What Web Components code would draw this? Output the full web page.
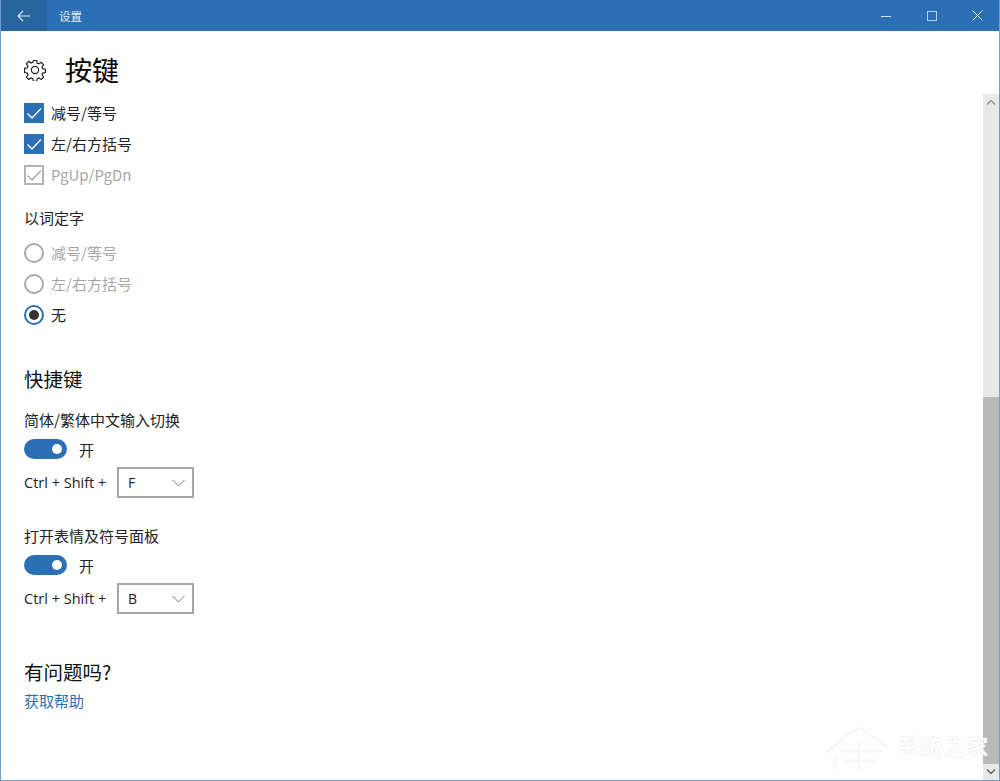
<!DOCTYPE html>
<html lang="zh">
<head>
<meta charset="utf-8">
<title>设置</title>
<style>
  html, body { margin: 0; height: 100%; background: #fff; }
  body { font-family: "Noto Sans CJK SC", "Liberation Sans", sans-serif; overflow: hidden; }
</style>
</head>
<body>
<settings-window>
  <page-heading>按键</page-heading>
  <win-check checked>减号/等号</win-check>
  <win-check checked>左/右方括号</win-check>
  <win-check checked disabled>PgUp/PgDn</win-check>
  <field-label style="margin-top:17px">以词定字</field-label>
  <win-radio disabled style="margin-top:8px">减号/等号</win-radio>
  <win-radio disabled>左/右方括号</win-radio>
  <win-radio checked>无</win-radio>
  <section-title style="margin-top:35px">快捷键</section-title>
  <shortcut-field label="简体/繁体中文输入切换" key-name="F" style="margin-top:16px"></shortcut-field>
  <shortcut-field label="打开表情及符号面板" key-name="B" style="margin-top:27px"></shortcut-field>
  <section-title style="margin-top:44px">有问题吗?</section-title>
  <help-link style="margin-top:4px">获取帮助</help-link>
</settings-window>

<script>
const FONT = `"Noto Sans CJK SC", "Liberation Sans", sans-serif`;
const check = '<svg width="20" height="20" viewBox="0 0 20 20" fill="none"><path d="M3.5 10.5 8 15 17 5.5" stroke="currentColor" stroke-width="1.4"/></svg>';

class SettingsWindow extends HTMLElement {
  constructor() {
    super();
    this.attachShadow({ mode: 'open' }).innerHTML = `
      <style>
        :host { display: flex; flex-direction: column; height: 781px; box-sizing: border-box;
          border: solid #6f9fd0; border-width: 0 1px 1px; position: relative; overflow: hidden; color: #1a1a1a; }
        .body { flex: 1; display: flex; min-height: 0; }
        .content { flex: 1; display: flex; flex-direction: column; padding: 23px 0 0 23px; }
        .wm { position: absolute; right: 9px; bottom: 20px; font: 700 21px ${FONT}; letter-spacing: 2px;
          color: #fff; text-shadow: 0 0 2px #dcdcdc; }
        .wm-logo { position: absolute; right: 110px; bottom: 5px; }
      </style>
      <title-bar></title-bar>
      <div class="body">
        <div class="content"><slot></slot></div>
        <win-scrollbar></win-scrollbar>
      </div>
      <svg class="wm-logo" width="66" height="52" viewBox="0 0 66 52" fill="none" stroke="#f7f7f7" stroke-width="3">
        <path d="M2 30 36 4 64 24M18 28h40M20 38h34M36 18v30M12 32v14"/>
      </svg>
      <div class="wm">系统之家</div>`;
  }
}

class TitleBar extends HTMLElement {
  constructor() {
    super();
    this.attachShadow({ mode: 'open' }).innerHTML = `
      <style>
        :host { display: flex; align-items: center; height: 31px; flex: none; margin: 0 -1px;
          background: #2b70b7; color: #e4eef8; font: 11.5px ${FONT}; }
        .back { width: 47px; height: 100%; background: #28649f; display: flex; align-items: center; justify-content: center; }
        .name { margin-left: 12px; flex: 1; }
        .ctl { width: 46px; height: 100%; display: flex; align-items: center; justify-content: center; }
        .ctl:last-child { width: 44px; margin-right: 1px; }
      </style>
      <div class="back"><svg width="14" height="12" viewBox="0 0 14 12" fill="none" stroke="#e4eef8" stroke-width="1.1"><path d="M13 6H1M6 1 1 6l5 5"/></svg></div>
      <div class="name">设置</div>
      <div class="ctl"><svg width="10" height="10" fill="none" stroke="#d7e5f4"><path d="M0 5.5h10"/></svg></div>
      <div class="ctl"><svg width="10" height="10" fill="none" stroke="#b9d4f0"><rect x=".5" y=".5" width="9" height="9"/></svg></div>
      <div class="ctl"><svg width="11" height="11" fill="none" stroke="#e4eef8"><path d="M.5.5l10 10M10.5.5l-10 10"/></svg></div>`;
  }
}

class WinScrollbar extends HTMLElement {
  constructor() {
    super();
    this.attachShadow({ mode: 'open' }).innerHTML = `
      <style>
        :host { display: flex; flex-direction: column; width: 16px; margin-top: 63px; flex: none; background: #e9e9e9; }
        .arrow { height: 16px; flex: none; display: flex; align-items: center; justify-content: center; }
        .track { flex: none; height: 287px; }
        .thumb { flex: 1; background: #b9b9b9; }
      </style>
      <div class="arrow"><svg width="10" height="6" fill="none" stroke="#8a8a8a" stroke-width="1.2"><path d="M1 5.5 5 1.5 9 5.5"/></svg></div>
      <div class="track"></div>
      <div class="thumb"></div>
      <div class="arrow"><svg width="10" height="6" fill="none" stroke="#555" stroke-width="1.2"><path d="M1 .5 5 4.5 9 .5"/></svg></div>`;
  }
}

class PageHeading extends HTMLElement {
  constructor() {
    super();
    this.attachShadow({ mode: 'open' }).innerHTML = `
      <style>
        :host { display: flex; align-items: center; height: 32px; margin-bottom: 11px; font: 27px/32px ${FONT}; color: #000; }
        svg { margin-right: 19px; flex: none; }
      </style>
      <svg width="22" height="22" viewBox="0 0 22 22" fill="none" stroke="#222" stroke-width="1.2">
        <path d="M9.3 1.5h3.4l.5 2.7 1.7.7 2.3-1.6 2.4 2.4-1.6 2.3.7 1.7 2.7.5v3.4l-2.7.5-.7 1.7 1.6 2.3-2.4 2.4-2.3-1.6-1.7.7-.5 2.7H9.3l-.5-2.7-1.7-.7-2.3 1.6-2.4-2.4 1.6-2.3-.7-1.7-2.7-.5V9.3l2.7-.5.7-1.7-1.6-2.3 2.4-2.4 2.3 1.6 1.7-.7z"/>
        <circle cx="11" cy="11" r="3.6"/>
      </svg>
      <slot></slot>`;
  }
}

class WinCheck extends HTMLElement {
  constructor() {
    super();
    this.attachShadow({ mode: 'open' }).innerHTML = `
      <style>
        :host { display: flex; align-items: center; height: 31px; font: 15px ${FONT}; color: #222; }
        :host([disabled]) { color: #a6a6a6; }
        .box { width: 20px; height: 20px; box-sizing: border-box; margin-right: 7px; background: #2b70b7; color: #fff; flex: none; }
        :host([disabled]) .box { background: #fff; border: 2px solid #b3b3b3; color: #a6a6a6; }
        :host([disabled]) svg { margin: -2px; display: block; }
        svg { display: block; }
      </style>
      <div class="box">${check}</div><slot></slot>`;
  }
}

class WinRadio extends HTMLElement {
  constructor() {
    super();
    this.attachShadow({ mode: 'open' }).innerHTML = `
      <style>
        :host { display: flex; align-items: center; height: 31px; font: 15px ${FONT}; color: #222; }
        :host([disabled]) { color: #a6a6a6; }
        .dot { width: 20px; height: 20px; box-sizing: border-box; margin-right: 7px; border: 2px solid #a8a8a8; border-radius: 50%; flex: none; position: relative; }
        :host([checked]) .dot { border-color: #2b70b7; }
        :host([checked]) .dot::after { content: ""; position: absolute; inset: 3px; border-radius: 50%; background: #333; }
      </style>
      <div class="dot"></div><slot></slot>`;
  }
}

class WinToggle extends HTMLElement {
  constructor() {
    super();
    this.attachShadow({ mode: 'open' }).innerHTML = `
      <style>
        :host { display: flex; align-items: center; font: 15px ${FONT}; color: #222; }
        .track { width: 43px; height: 20px; border-radius: 10px; background: #2b70b7; margin-right: 12px; display: flex; align-items: center; justify-content: flex-end; padding-right: 5px; box-sizing: border-box; }
        .knob { width: 10px; height: 10px; border-radius: 50%; background: #fff; }
      </style>
      <div class="track"><div class="knob"></div></div><slot></slot>`;
  }
}

class KeySelect extends HTMLElement {
  constructor() {
    super();
    this.attachShadow({ mode: 'open' }).innerHTML = `
      <style>
        :host { display: flex; align-items: center; justify-content: space-between; box-sizing: border-box; width: 77px; height: 31px;
          border: 2px solid #a6a6a6; padding: 0 7px 0 9px; font: 14px "Open Sans", "Liberation Sans", sans-serif; color: #222; }
      </style>
      <slot></slot>
      <svg width="13" height="8" fill="none" stroke="#777"><path d="M.5 1 6.5 7 12.5 1"/></svg>`;
  }
}

class ShortcutField extends HTMLElement {
  constructor() {
    super();
    this.attachShadow({ mode: 'open' }).innerHTML = `
      <style>
        :host { display: flex; flex-direction: column; }
        .keys { display: flex; align-items: center; font: 14.5px "Open Sans", "Liberation Sans", sans-serif; color: #222; margin-top: 8px; }
        .keys span { width: 93px; flex: none; }
        win-toggle { margin-top: 8px; height: 20px; }
      </style>
      <field-label></field-label>
      <win-toggle>开</win-toggle>
      <div class="keys"><span>Ctrl + Shift +</span><key-select></key-select></div>`;
    this.shadowRoot.querySelector('field-label').textContent = this.getAttribute('label');
    this.shadowRoot.querySelector('key-select').textContent = this.getAttribute('key-name');
  }
}

class FieldLabel extends HTMLElement {
  constructor() {
    super();
    this.attachShadow({ mode: 'open' }).innerHTML = `
      <style>:host { display: block; font: 15px/22px ${FONT}; color: #222; }</style><slot></slot>`;
  }
}

class SectionTitle extends HTMLElement {
  constructor() {
    super();
    this.attachShadow({ mode: 'open' }).innerHTML = `
      <style>:host { display: block; font: 19.5px/28px ${FONT}; color: #111; }</style><slot></slot>`;
  }
}

class HelpLink extends HTMLElement {
  constructor() {
    super();
    this.attachShadow({ mode: 'open' }).innerHTML = `
      <style>:host { display: block; font: 15px/22px ${FONT}; color: #2b70b7; }</style><slot></slot>`;
  }
}

customElements.define('field-label', FieldLabel);
customElements.define('section-title', SectionTitle);
customElements.define('help-link', HelpLink);
customElements.define('win-check', WinCheck);
customElements.define('win-radio', WinRadio);
customElements.define('win-toggle', WinToggle);
customElements.define('key-select', KeySelect);
customElements.define('shortcut-field', ShortcutField);
customElements.define('page-heading', PageHeading);
customElements.define('win-scrollbar', WinScrollbar);
customElements.define('title-bar', TitleBar);
customElements.define('settings-window', SettingsWindow);
</script>
</body>
</html>
